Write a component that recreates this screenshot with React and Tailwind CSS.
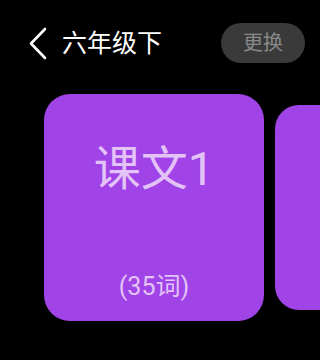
const lessons = [
  { id: 1, title: "课文1", count: 35 },
  { id: 2, title: "课文2", count: 28 },
];

function BackIcon() {
  return (
    <svg width="20" height="33" viewBox="0 0 20 33" fill="none" className="text-white">
      <path
        d="M17 2 L3 16.5 L17 31"
        stroke="currentColor"
        strokeWidth="2.6"
        strokeLinecap="round"
        strokeLinejoin="round"
      />
    </svg>
  );
}

function LessonCard({ lesson, active }) {
  return (
    <div
      className={`flex shrink-0 flex-col items-center bg-[#a044e8] text-[#e4c3f7] ${
        active ? "h-[227px] w-[220px] rounded-[26px]" : "h-[205px] w-[198px] rounded-[24px]"
      }`}
    >
      {active && (
        <>
          <span className="pt-[52px] text-[47px] leading-[46px]">{lesson.title}</span>
          <span className="mt-auto pb-[20px] text-[25px] leading-[28px]">
            ({lesson.count}词)
          </span>
        </>
      )}
    </div>
  );
}

export default function App() {
  return (
    <div className="h-[360px] w-[320px] overflow-hidden bg-black font-['Roboto','Noto_Sans_CJK_SC',sans-serif]">
      <div className="flex h-[86px] items-center pl-[28px] pr-[15px]">
        <BackIcon />
        <span className="ml-[14px] text-[25px] leading-none text-white">六年级下</span>
        <button className="ml-auto h-[40px] w-[84px] rounded-full bg-[#3a3a3a] text-[20px] text-[#8a8a8a]">
          更换
        </button>
      </div>
      <div className="flex items-center gap-[11px] pl-[44px] pt-[8px]">
        {lessons.map((lesson, i) => (
          <LessonCard key={lesson.id} lesson={lesson} active={i === 0} />
        ))}
      </div>
    </div>
  );
}
